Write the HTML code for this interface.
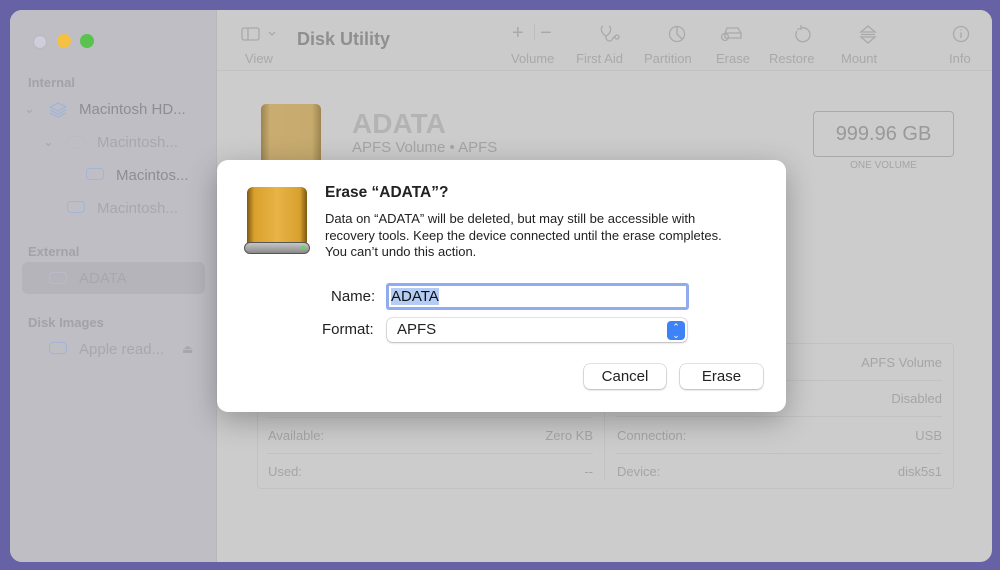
<!DOCTYPE html>
<html><head><meta charset="utf-8"><style>
*{margin:0;padding:0;box-sizing:border-box}
body{width:1000px;height:570px;background:#6761a6;font-family:"Liberation Sans",sans-serif;position:relative;overflow:hidden}
.win{position:absolute;left:10px;top:10px;width:982px;height:552px;border-radius:12px;overflow:hidden;background:#cccccc}
.side{position:absolute;left:0;top:0;width:207px;height:552px;background:#bfbec4;border-right:1px solid #b8b8bc}
.a{position:absolute;white-space:nowrap}
.sh{font-size:13px;color:#a3a2a9;font-weight:bold}
.si{font-size:15px;color:#8e8d93}
.si2{font-size:15px;color:#a8a7ae}
.tb{position:absolute;left:207px;top:0;right:0;height:61px;border-bottom:1px solid #c2c2c2;background:#cbcbcb}
.tl{font-size:13px;color:#a9a9a9}
.ic{stroke:#a9a9a9;fill:none;stroke-width:1.3}
.gr{font-size:13px;color:#a5a5a5}
.dlg{position:absolute;left:217px;top:160px;width:569px;height:252px;background:#fff;border-radius:11px;box-shadow:0 8px 30px rgba(0,0,0,.28)}
.btn{position:absolute;height:25px;border-radius:6px;background:#fff;box-shadow:0 0 0 .5px rgba(0,0,0,.2),0 1px 2px rgba(0,0,0,.2);font-size:15px;color:#222;text-align:center;line-height:25px}
.ln{position:absolute;height:1px;background:#c2c2c2;width:326px}
</style></head><body>
<div class="win">
 <div class="side">
  <div class="a" style="left:23px;top:25px;width:14px;height:14px;border-radius:50%;background:#cfcdd9;border:1px solid #b8b6c6"></div>
  <div class="a" style="left:47px;top:24px;width:14px;height:14px;border-radius:50%;background:#f5c143"></div>
  <div class="a" style="left:70px;top:24px;width:14px;height:14px;border-radius:50%;background:#5ac34f"></div>
  <div class="a sh" style="left:18px;top:65px">Internal</div>
  <div class="a si2" style="left:14px;top:91px;font-size:13px">⌄</div>
  <svg class="a" style="left:38px;top:91px" width="20" height="18"><path d="M10 2 L18 6 L10 10 L2 6Z M2 9 L10 13 L18 9 M2 12 L10 16 L18 12" stroke="#a3b4d8" fill="none" stroke-width="1.3"/></svg>
  <div class="a si" style="left:69px;top:91px">Macintosh HD...</div>
  <div class="a si2" style="left:33px;top:124px;font-size:13px">⌄</div>
  <div class="a" style="left:57px;top:126px;width:18px;height:12px;border:1.3px solid #b9bcc8;border-radius:4px"></div>
  <div class="a si2" style="left:87px;top:124px">Macintosh...</div>
  <div class="a" style="left:76px;top:158px;width:18px;height:12px;border:1.3px solid #a3b4d8;border-radius:4px"></div>
  <div class="a si" style="left:106px;top:157px">Macintos...</div>
  <div class="a" style="left:57px;top:191px;width:18px;height:12px;border:1.3px solid #a3b4d8;border-radius:4px"></div>
  <div class="a si2" style="left:87px;top:190px">Macintosh...</div>
  <div class="a sh" style="left:18px;top:234px">External</div>
  <div class="a" style="left:12px;top:252px;width:183px;height:32px;border-radius:6px;background:#b5b4ba"></div>
  <div class="a" style="left:39px;top:262px;width:18px;height:12px;border:1.3px solid #b9bcc8;border-radius:4px"></div>
  <div class="a si2" style="left:69px;top:260px">ADATA</div>
  <div class="a sh" style="left:18px;top:305px">Disk Images</div>
  <div class="a" style="left:39px;top:332px;width:18px;height:12px;border:1.3px solid #a3b4d8;border-radius:4px"></div>
  <div class="a si2" style="left:69px;top:331px">Apple read...</div>
  <div class="a si2" style="left:172px;top:332px;font-size:12px">⏏</div>
 </div>
 <div class="tb">
  <svg class="a" style="left:24px;top:16px" width="40" height="16"><rect x="1" y="2" width="17" height="12" rx="2" class="ic"/><path d="M7 2V14" class="ic"/><path d="M28 6l3 3 3-3" class="ic"/></svg>
  <div class="a tl" style="left:28px;top:41px">View</div>
  <div class="a" style="left:80px;top:19px;font-size:18px;font-weight:bold;color:#8f8f8f">Disk Utility</div>
  <div class="a" style="left:295px;top:12px;font-size:20px;color:#a9a9a9">+</div>
  <div class="a" style="left:317px;top:14px;width:1px;height:16px;background:#bdbdbd"></div>
  <div class="a" style="left:323px;top:12px;font-size:20px;color:#a9a9a9">−</div>
  <div class="a tl" style="left:294px;top:41px">Volume</div>
  <svg class="a" style="left:382px;top:14px" width="24" height="20"><path d="M4 2C1 4 2 9 7 12C12 9 13 4 10 2M7 12V14C8 18 13 18 14 14L16 12" class="ic"/><circle cx="18" cy="13" r="2" class="ic"/></svg>
  <div class="a tl" style="left:359px;top:41px">First Aid</div>
  <svg class="a" style="left:450px;top:14px" width="20" height="20"><circle cx="10" cy="10" r="7.5" class="ic"/><path d="M10 2.5V10L15 15" class="ic"/></svg>
  <div class="a tl" style="left:427px;top:41px">Partition</div>
  <svg class="a" style="left:503px;top:15px" width="24" height="18"><path d="M5 8 L7 3 H18 L21 8 V13 H5Z M5 8H21" class="ic"/><circle cx="5" cy="12" r="3.5" class="ic" fill="#cbcbcb"/></svg>
  <div class="a tl" style="left:499px;top:41px">Erase</div>
  <svg class="a" style="left:575px;top:14px" width="20" height="20"><path d="M5 7A7 7 0 1 0 9 4 M9 1V5H5" class="ic"/></svg>
  <div class="a tl" style="left:552px;top:41px">Restore</div>
  <svg class="a" style="left:641px;top:14px" width="20" height="22"><path d="M3 8L10 2 17 8Z M3 13L10 19 17 13Z M3 10.5H17" class="ic"/></svg>
  <div class="a tl" style="left:624px;top:41px">Mount</div>
  <svg class="a" style="left:734px;top:14px" width="20" height="20"><circle cx="10" cy="10" r="7.5" class="ic"/><path d="M10 8.5V14M10 5.5V6.5" class="ic"/></svg>
  <div class="a tl" style="left:732px;top:41px">Info</div>
 </div>
 <div class="a" style="left:251px;top:94px;width:60px;height:70px;border-radius:5px;background:linear-gradient(90deg,#9c8550,#c8ac70 15%,#c6aa6e 85%,#9c8550)"></div>
 <div class="a" style="left:342px;top:98px;font-size:28px;font-weight:bold;color:#b3b3b3">ADATA</div>
 <div class="a" style="left:342px;top:129px;font-size:15px;color:#a5a5a5">APFS Volume • APFS</div>
 <div class="a" style="left:803px;top:101px;width:141px;height:46px;border:1px solid #a9a9a9;border-radius:4px;text-align:center;line-height:44px;font-size:20px;color:#999">999.96 GB</div>
 <div class="a" style="left:803px;top:150px;width:141px;text-align:center;font-size:10px;color:#a5a5a5">ONE VOLUME</div>
 <div class="a" style="left:247px;top:333px;width:697px;height:146px;border:1px solid #c2c2c2;border-radius:4px"></div>
 <div class="a" style="left:594px;top:340px;width:1px;height:130px;background:#c2c2c2"></div>
 <div class="ln" style="left:257px;top:407px"></div>
 <div class="ln" style="left:257px;top:443px"></div>
 <div class="ln" style="left:606px;top:370px"></div>
 <div class="ln" style="left:606px;top:406px"></div>
 <div class="ln" style="left:606px;top:443px"></div>
 <div class="a gr" style="left:258px;top:418px">Available:</div>
 <div class="a gr" style="right:399px;top:418px">Zero KB</div>
 <div class="a gr" style="left:258px;top:454px">Used:</div>
 <div class="a gr" style="right:399px;top:454px">--</div>
 <div class="a gr" style="right:50px;top:345px">APFS Volume</div>
 <div class="a gr" style="right:50px;top:381px">Disabled</div>
 <div class="a gr" style="left:607px;top:418px">Connection:</div>
 <div class="a gr" style="right:50px;top:418px">USB</div>
 <div class="a gr" style="left:607px;top:454px">Device:</div>
 <div class="a gr" style="right:50px;top:454px">disk5s1</div>
</div>
<div class="dlg">
 <div class="a" style="left:30px;top:27px;width:60px;height:62px;border-radius:6px 6px 3px 3px;background:linear-gradient(90deg,#7a5a10,#d9a02e 12%,#e8b445 50%,#d9a02e 88%,#7a5a10)"></div>
 <div class="a" style="left:27px;top:82px;width:66px;height:12px;border-radius:6px;background:linear-gradient(#c6c6c6,#8a8a8a);border:1px solid #555"></div>
 <div class="a" style="left:84px;top:86px;width:4px;height:4px;border-radius:50%;background:#5d5"></div>
 <div class="a" style="left:108px;top:24px;font-size:15.5px;font-weight:bold;color:#222">Erase “ADATA”?</div>
 <div class="a" style="left:108px;top:51px;font-size:13px;line-height:16.5px;color:#222">Data on “ADATA” will be deleted, but may still be accessible with<br>recovery tools. Keep the device connected until the erase completes.<br>You can’t undo this action.</div>
 <div class="a" style="left:114px;top:128px;font-size:15px;color:#222">Name:</div>
 <div class="a" style="left:169px;top:123px;width:303px;height:27px;border:3px solid #91abf0;border-radius:3px;background:#fff"></div>
 <div class="a" style="left:174px;top:128px;font-size:15px;color:#111;background:#b5cdf5;line-height:17px">ADATA</div>
 <div class="a" style="left:105px;top:161px;font-size:15px;color:#222">Format:</div>
 <div class="a" style="left:170px;top:158px;width:300px;height:24px;border-radius:5px;background:#fff;box-shadow:0 0 0 .5px rgba(0,0,0,.2),0 1px 2px rgba(0,0,0,.2)"></div>
 <div class="a" style="left:180px;top:161px;font-size:15px;color:#222">APFS</div>
 <div class="a" style="left:450px;top:161px;width:18px;height:19px;border-radius:4px;background:#3d82f6;color:#fff;font-size:9px;line-height:8px;text-align:center;padding-top:2px">⌃<br>⌄</div>
 <div class="btn" style="left:367px;top:204px;width:82px">Cancel</div>
 <div class="btn" style="left:463px;top:204px;width:83px">Erase</div>
</div>
</body></html>
